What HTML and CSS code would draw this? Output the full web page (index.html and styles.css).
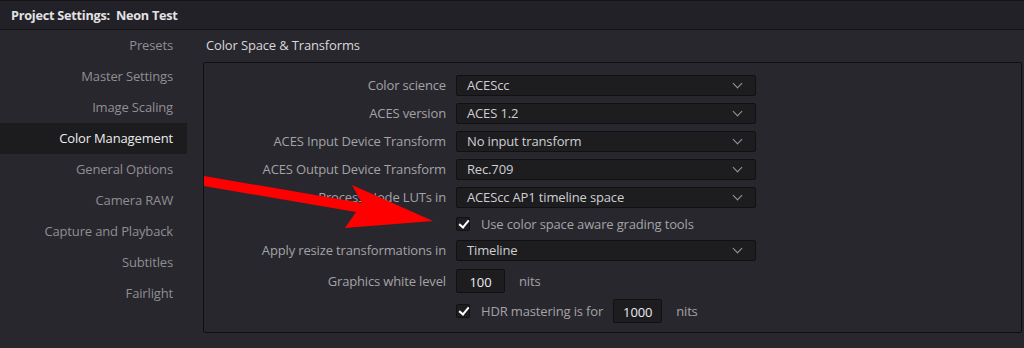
FILE: index.html
```html
<!DOCTYPE html>
<html>
<head>
<meta charset="utf-8">
<title>Project Settings</title>
<link rel="stylesheet" href="styles.css">
</head>
<body>
  <div class="titlebar">Project Settings:&nbsp; Neon Test</div>
  <div class="main">
    <div class="sidebar">
      <div class="nav-item">Presets</div>
      <div class="nav-item">Master Settings</div>
      <div class="nav-item">Image Scaling</div>
      <div class="nav-item active">Color Management</div>
      <div class="nav-item">General Options</div>
      <div class="nav-item">Camera RAW</div>
      <div class="nav-item">Capture and Playback</div>
      <div class="nav-item">Subtitles</div>
      <div class="nav-item">Fairlight</div>
    </div>
    <div class="content">
      <div class="section-title">Color Space &amp; Transforms</div>
      <div class="group">
        <div class="row">
          <div class="label">Color science</div>
          <div class="select">ACEScc<span class="chev"></span></div>
        </div>
        <div class="row">
          <div class="label">ACES version</div>
          <div class="select">ACES 1.2<span class="chev"></span></div>
        </div>
        <div class="row">
          <div class="label">ACES Input Device Transform</div>
          <div class="select">No input transform<span class="chev"></span></div>
        </div>
        <div class="row">
          <div class="label">ACES Output Device Transform</div>
          <div class="select">Rec.709<span class="chev"></span></div>
        </div>
        <div class="row">
          <div class="label">Process Node LUTs in</div>
          <div class="select">ACEScc AP1 timeline space<span class="chev"></span></div>
        </div>
        <div class="row short">
          <div class="label"></div>
          <div class="check-line"><span class="check"></span>Use color space aware grading tools</div>
        </div>
        <div class="row short">
          <div class="label">Apply resize transformations in</div>
          <div class="select">Timeline<span class="chev"></span></div>
        </div>
        <div class="row tall">
          <div class="label">Graphics white level</div>
          <div class="check-line"><span class="num">100</span><span class="unit">nits</span></div>
        </div>
        <div class="row">
          <div class="label"></div>
          <div class="check-line"><span class="check"></span>HDR mastering is for<span class="num wide">1000</span><span class="unit">nits</span></div>
        </div>
      </div>
    </div>
  </div>

  <svg class="arrow" width="1024" height="348" viewBox="0 0 1024 348">
    <polygon points="204,176 362,203 352,185 433,221 345,228 356,212 204,186" fill="#ff0000"/>
  </svg>
</body>
</html>
```

FILE: styles.css
```css
html, body {
  margin: 0;
  height: 100%;
}

body {
  background: #28272d;
  font-family: "Open Sans", "Noto Sans", sans-serif;
  font-size: 13px;
  letter-spacing: -0.15px;
  color: #a3a3a6;
  position: relative;
  overflow: hidden;
}

.titlebar {
  height: 30px;
  line-height: 28px;
  padding-left: 11px;
  background: #222127;
  border-top: 1px solid #151417;
  border-bottom: 1px solid #151417;
  box-sizing: border-box;
  font-weight: bold;
  font-size: 12.7px;
  letter-spacing: -0.25px;
  color: #e2e2e4;
}

.main {
  display: flex;
}

.sidebar {
  width: 187px;
}

.nav-item {
  height: 31px;
  line-height: 31px;
  text-align: right;
  padding-right: 14px;
  color: #8f8f93;
}

.nav-item.active {
  background: #1c1c1f;
  color: #ececee;
}

.content {
  flex: 1;
  margin-left: 16px;
  margin-right: 2px;
}

.section-title {
  height: 32px;
  line-height: 31px;
  padding-left: 3px;
  color: #d8d8da;
}

.group {
  border: 1px solid #0f0f11;
  border-radius: 2px;
  height: 271px;
  box-sizing: border-box;
  padding-top: 8px;
}

.row {
  display: flex;
  align-items: center;
  height: 28px;
}

.row.short {
  height: 26px;
}

.row.tall {
  height: 33px;
  margin-top: 1px;
}

.label {
  width: 242px;
  text-align: right;
  margin-right: 10px;
  color: #a3a3a6;
  white-space: nowrap;
}

.select {
  width: 300px;
  height: 21px;
  line-height: 20px;
  box-sizing: border-box;
  background: #1d1d20;
  border: 1px solid #111113;
  border-radius: 2px;
  padding-left: 10px;
  color: #cfcfd1;
  display: flex;
  align-items: center;
  justify-content: space-between;
}

.chev {
  width: 6px;
  height: 6px;
  border-right: 1.3px solid #9a9a9d;
  border-bottom: 1.3px solid #9a9a9d;
  transform: rotate(45deg);
  margin-right: 14px;
  margin-top: -4px;
}

.check-line {
  display: flex;
  align-items: center;
  color: #a3a3a6;
}

.check {
  width: 14px;
  height: 14px;
  box-sizing: border-box;
  background: #1d1d20;
  border: 1px solid #111113;
  border-radius: 2px;
  margin-right: 11px;
  position: relative;
}

.check::after {
  content: "";
  position: absolute;
  left: 4px;
  top: 0px;
  width: 4px;
  height: 8px;
  border-right: 2px solid #ffffff;
  border-bottom: 2px solid #ffffff;
  transform: rotate(40deg);
}

.num {
  width: 49px;
  height: 24px;
  line-height: 24px;
  box-sizing: border-box;
  background: #1d1d20;
  border: 1px solid #111113;
  border-radius: 2px;
  text-align: center;
  color: #ececee;
}

.num.wide {
  margin-left: 10px;
}

.unit {
  margin-left: 14px;
}

.arrow {
  position: absolute;
  left: 0;
  top: 0;
  pointer-events: none;
}
```
